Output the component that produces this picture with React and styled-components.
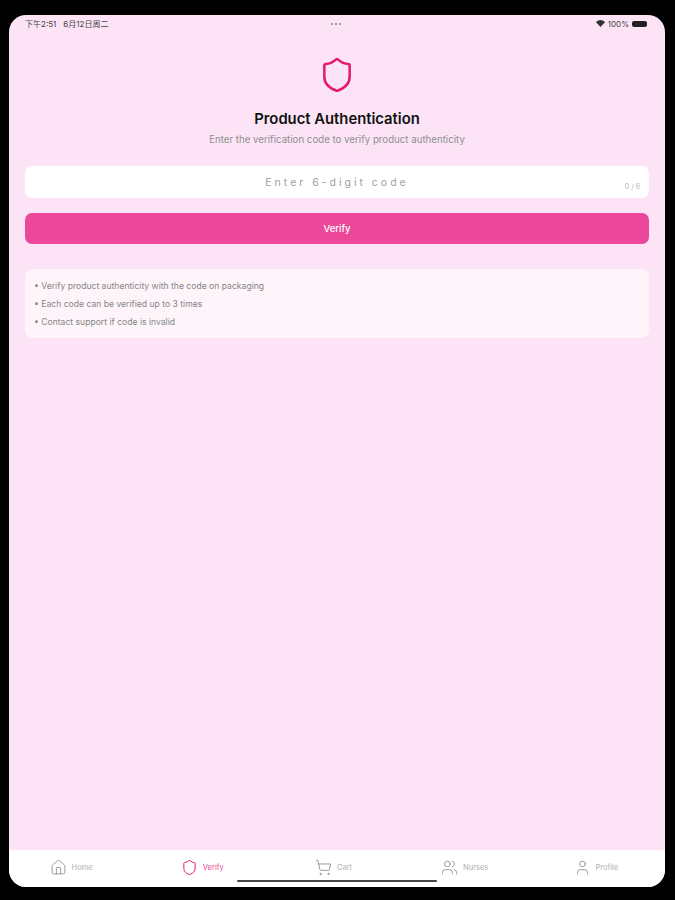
import React from "react";
import styled, { createGlobalStyle } from "styled-components";
import { Shield, House, ShoppingCart, Users, User } from "lucide-react";

const GlobalStyle = createGlobalStyle`
  html, body {
    margin: 0;
    padding: 0;
    background: #000;
  }
  * {
    box-sizing: border-box;
  }
`;

const Frame = styled.div`
  width: 675px;
  height: 900px;
  padding: 15px 10px 13px 9px;
  background: #000;
  font-family: Inter, "Noto Sans CJK SC", sans-serif;
`;

const Screen = styled.div`
  position: relative;
  height: 872px;
  display: flex;
  flex-direction: column;
  border-radius: 17px;
  overflow: hidden;
  background: #fce4f6;
`;

const StatusBar = styled.div`
  height: 15px;
  padding: 2px 18px 0 16px;
  display: grid;
  grid-template-columns: 1fr auto 1fr;
  align-items: center;
  font-size: 8px;
  line-height: 10px;
  color: #444;
`;

const StatusTime = styled.div`
  display: flex;
  gap: 7px;
`;

const Dots = styled.div`
  display: flex;
  gap: 2px;
`;

const Dot = styled.span`
  width: 2px;
  height: 2px;
  border-radius: 50%;
  background: #888;
`;

const StatusRight = styled.div`
  display: flex;
  justify-content: flex-end;
  align-items: center;
  gap: 3px;
`;

const Battery = styled.span`
  width: 15px;
  height: 6px;
  border-radius: 2px;
  background: #222;
`;

const Content = styled.main`
  flex: 1;
  padding: 26px 16px 0;
  display: flex;
  flex-direction: column;
  align-items: stretch;
`;

const Header = styled.header`
  display: flex;
  flex-direction: column;
  align-items: center;
`;

const Title = styled.h1`
  margin: 16px 0 0;
  font-size: 14.8px;
  line-height: 18px;
  font-weight: 600;
  color: #111;
`;

const Subtitle = styled.p`
  margin: 4px 0 0;
  font-size: 9.7px;
  line-height: 15px;
  color: #8f8f8f;
`;

const InputBox = styled.div`
  position: relative;
  margin-top: 19px;
  height: 32px;
  border-radius: 7px;
  background: #fff;
  display: flex;
  align-items: center;
  justify-content: center;
`;

const CodeInput = styled.input`
  width: 100%;
  height: 100%;
  border: 0;
  outline: 0;
  background: transparent;
  text-align: center;
  font-family: inherit;
  font-size: 10.5px;
  letter-spacing: 3px;
  padding-bottom: 1px;

  &::placeholder {
    color: #a0a0a0;
    opacity: 1;
  }
`;

const Counter = styled.span`
  position: absolute;
  right: 9px;
  bottom: 7px;
  font-size: 7px;
  line-height: 9px;
  color: #b5b5b5;
`;

const VerifyButton = styled.button`
  margin-top: 15px;
  height: 31px;
  border: 0;
  border-radius: 7px;
  background: #ec4899;
  color: #fff;
  font-family: inherit;
  font-size: 9.5px;
  font-weight: 500;
`;

const InfoCard = styled.ul`
  margin: 25px 0 0;
  height: 69px;
  padding: 9px 10px 8px 9px;
  list-style: none;
  border-radius: 8px;
  background: #fef5fb;
  display: flex;
  flex-direction: column;
  justify-content: center;
  gap: 5px;
`;

const InfoItem = styled.li`
  font-size: 8.6px;
  line-height: 13px;
  color: #858585;
`;

const TabBar = styled.nav`
  height: 37px;
  padding-bottom: 2px;
  display: grid;
  grid-template-columns: repeat(5, 1fr);
  background: #fff;
`;

const Tab = styled.div`
  padding-right: 7px;
  display: flex;
  align-items: center;
  justify-content: center;
  gap: 5px;
  font-size: 7.5px;
  color: ${(props) => (props.$active ? "#ec4899" : "#b0b0b0")};

  svg {
    color: ${(props) => (props.$active ? "#e5196f" : "#9a9a9a")};
  }
`;

const HomeIndicator = styled.div`
  position: absolute;
  left: 228px;
  bottom: 5px;
  width: 200px;
  height: 2px;
  border-radius: 1px;
  background: #444;
`;

const tabs = [
  { label: "Home", Icon: House },
  { label: "Verify", Icon: Shield, active: true },
  { label: "Cart", Icon: ShoppingCart },
  { label: "Nurses", Icon: Users },
  { label: "Profile", Icon: User },
];

const tips = [
  "• Verify product authenticity with the code on packaging",
  "• Each code can be verified up to 3 times",
  "• Contact support if code is invalid",
];

export default function App() {
  return (
    <Frame>
      <GlobalStyle />
      <Screen>
        <StatusBar>
          <StatusTime>
            <span>下午2:51</span>
            <span>6月12日周二</span>
          </StatusTime>
          <Dots>
            <Dot />
            <Dot />
            <Dot />
          </Dots>
          <StatusRight>
            <svg width="9" height="7" viewBox="0 0 18 14">
              <path d="M9 14 0 4.5C5-1.5 13-1.5 18 4.5Z" fill="#333" />
            </svg>
            <span>100%</span>
            <Battery />
          </StatusRight>
        </StatusBar>
        <Content>
          <Header>
            <Shield size={38} color="#e5196f" strokeWidth={1.6} />
            <Title>Product Authentication</Title>
            <Subtitle>Enter the verification code to verify product authenticity</Subtitle>
          </Header>
          <InputBox>
            <CodeInput placeholder="Enter 6-digit code" maxLength={6} />
            <Counter>0 / 6</Counter>
          </InputBox>
          <VerifyButton type="button">Verify</VerifyButton>
          <InfoCard>
            {tips.map((tip) => (
              <InfoItem key={tip}>{tip}</InfoItem>
            ))}
          </InfoCard>
        </Content>
        <TabBar>
          {tabs.map(({ label, Icon, active }) => (
            <Tab key={label} $active={active}>
              <Icon size={17} strokeWidth={1.4} />
              <span>{label}</span>
            </Tab>
          ))}
        </TabBar>
        <HomeIndicator />
      </Screen>
    </Frame>
  );
}
